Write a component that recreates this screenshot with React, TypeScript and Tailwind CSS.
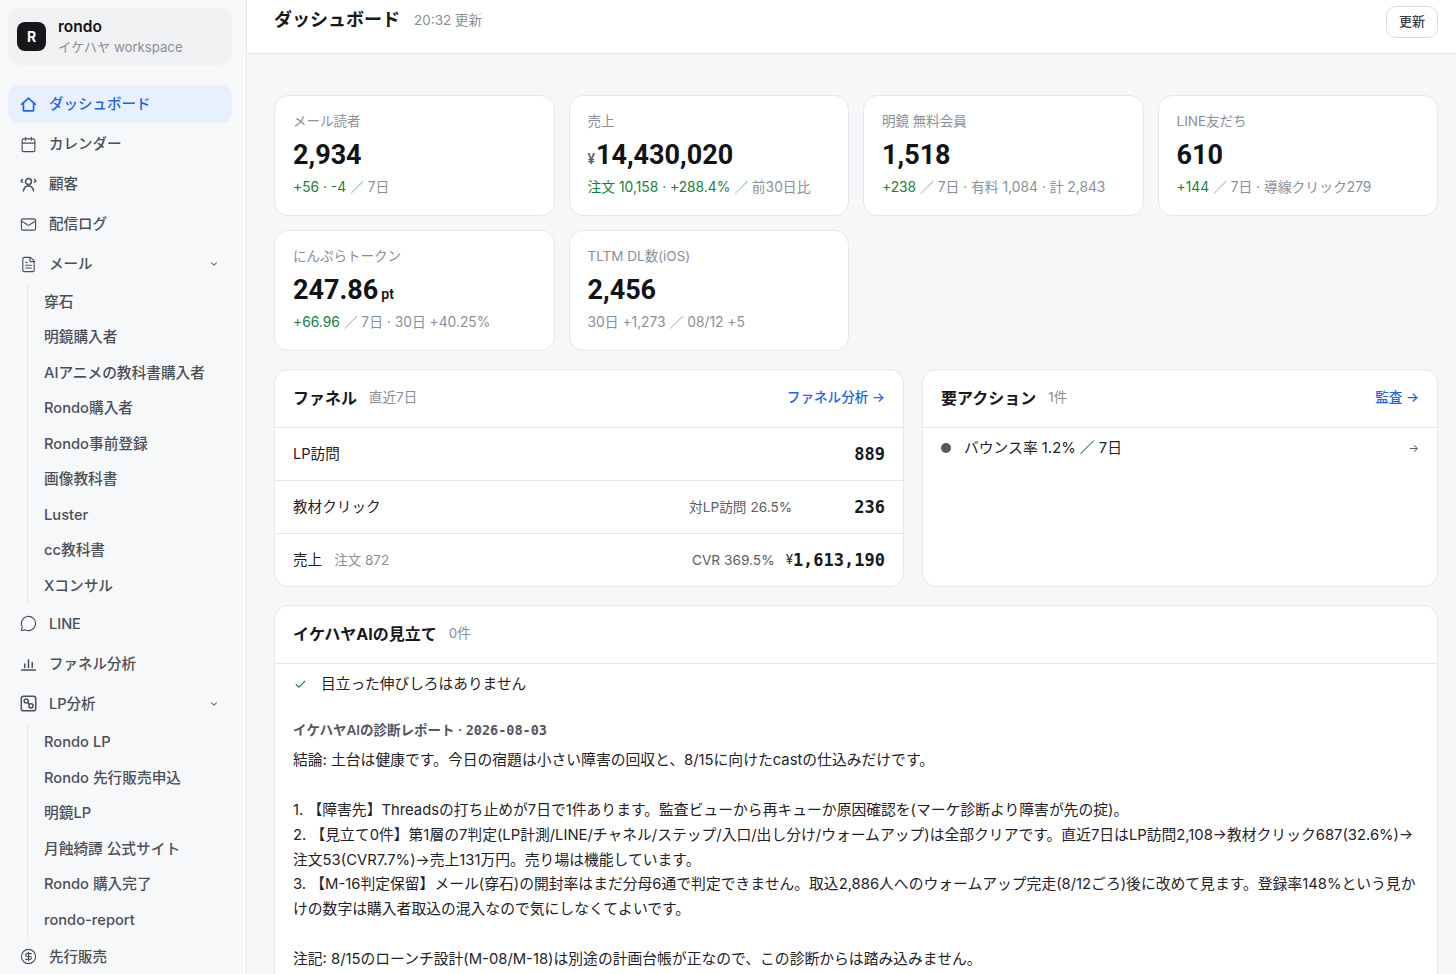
import type { ReactNode } from "react";
import { Calendar, Mail, FileText, MessageCircle, CircleDollarSign, ChevronDown, Check } from "lucide-react";

const FONT = "[font-family:Inter,'Noto_Sans_CJK_JP',sans-serif]";
const NUM = "[font-family:Roboto,'Noto_Sans_CJK_JP',sans-serif]";
const MONO = "[font-family:'DejaVu_Sans_Mono','Noto_Sans_CJK_JP',monospace]";

const HomeIcon = () => (
  <svg width="17" height="17" viewBox="0 0 16 16" fill="none" stroke="currentColor" strokeWidth="1.600" strokeLinecap="round" strokeLinejoin="round">
    <path d="M1.500 7.800 8 2l6.500 5.800" />
    <path d="M3.200 6.500v6.800c0 .4.300.7.700.7h8.200c.4 0 .7-.3.700-.7V6.500" />
  </svg>
);

const CustomerIcon = () => (
  <svg width="17" height="17" viewBox="0 0 16 16" fill="none" stroke="currentColor" strokeWidth="1.400" strokeLinecap="round" strokeLinejoin="round">
    <circle cx="8" cy="5.200" r="2.800" />
    <path d="M3.200 14c.5-3 2.400-4.600 4.800-4.600s4.300 1.600 4.800 4.600" />
    <path d="M2.300 3.400 1 4.700l1.300 1.200M13.700 3.400 15 4.700l-1.300 1.200" />
  </svg>
);

const ChartIcon = () => (
  <svg width="17" height="17" viewBox="0 0 16 16" fill="none" stroke="currentColor" strokeWidth="1.400" strokeLinecap="round">
    <path d="M1.500 14.200h13M4.500 11.700V8.500M8 11.700V4.500M11.500 11.700V7" />
  </svg>
);

const LpIcon = () => (
  <svg width="17" height="17" viewBox="0 0 16 16" fill="none" stroke="currentColor" strokeWidth="1.400" strokeLinecap="round">
    <rect x="1.200" y="1.200" width="13.600" height="13.600" rx="2.200" />
    <circle cx="5.800" cy="5.600" r="1.900" />
    <circle cx="10.300" cy="10.200" r="2" />
    <path d="M7.300 6.800 8.800 8.700" />
  </svg>
);

const NavItem = ({ icon, label, active, caret }: { icon: ReactNode; label: string; active?: boolean; caret?: boolean }) => (
  <div
    className={`flex h-[38px] items-center gap-[12px] rounded-[10px] pl-[12px] pr-[13px] text-[14.500px] font-medium ${
      active ? "bg-[#e8f0fe] text-[#2563eb]" : "text-[#4b5058]"
    }`}
  >
    <span className="flex w-[17px] justify-center">{icon}</span>
    <span className="flex-1">{label}</span>
    {caret && <ChevronDown size={10} strokeWidth={2.500} />}
  </div>
);

const SubList = ({ items }: { items: string[] }) => (
  <div className="ml-[19px] border-l border-[#e2e4e8] pl-4">
    {items.map((item) => (
      <div key={item} className="flex h-[35.500px] items-center text-[14.700px] font-medium text-[#4b5058]">
        {item}
      </div>
    ))}
  </div>
);

const Sidebar = () => (
  <aside className="flex h-full w-[247px] shrink-0 flex-col border-r border-[#e7e8ec] bg-[#f7f8fa] pl-2 pr-[14px] pt-2">
    <div className="mb-5 flex h-[57px] shrink-0 items-center gap-3 rounded-[12px] bg-[#f0f1f3] pl-[9px]">
      <div className="flex h-[29px] w-[29px] items-center justify-center rounded-[8px] bg-[#15171a] text-[14px] font-bold text-white">R</div>
      <div>
        <div className="text-[15.500px] leading-[20px] font-semibold text-[#111]">rondo</div>
        <div className="text-[13.200px] leading-[20px] text-[#8b8f97]">イケハヤ workspace</div>
      </div>
    </div>
    <nav className="flex flex-col gap-[2px]">
      <NavItem active icon={<HomeIcon />} label="ダッシュボード" />
      <NavItem icon={<Calendar size={17} strokeWidth={1.600} />} label="カレンダー" />
      <NavItem icon={<CustomerIcon />} label="顧客" />
      <NavItem icon={<Mail size={17} strokeWidth={1.600} />} label="配信ログ" />
      <NavItem caret icon={<FileText size={17} strokeWidth={1.600} />} label="メール" />
      <div className="-mt-px -mb-px">
        <SubList items={["穿石", "明鏡購入者", "AIアニメの教科書購入者", "Rondo購入者", "Rondo事前登録", "画像教科書", "Luster", "cc教科書", "Xコンサル"]} />
      </div>
      <NavItem icon={<MessageCircle size={17} strokeWidth={1.600} />} label="LINE" />
      <NavItem icon={<ChartIcon />} label="ファネル分析" />
      <NavItem caret icon={<LpIcon />} label="LP分析" />
      <div className="-mb-[2px]">
        <SubList items={["Rondo LP", "Rondo 先行販売申込", "明鏡LP", "月蝕綺譚 公式サイト", "Rondo 購入完了", "rondo-report"]} />
      </div>
      <NavItem icon={<CircleDollarSign size={17} strokeWidth={1.600} />} label="先行販売" />
    </nav>
  </aside>
);

const StatCard = ({ label, value, prefix, unit, children }: { label: string; value: string; prefix?: string; unit?: string; children: ReactNode }) => (
  <div className="h-[121px] rounded-[14px] border border-[#e5e7eb] bg-white pl-[18px] pt-[15px]">
    <div className="text-[13.500px] leading-[20px] text-[#8b8f97]">{label}</div>
    <div className={`${NUM} mt-[7px] flex h-[34px] items-baseline text-[27px] leading-[34px] font-bold text-[#111318]`}>
      {prefix && <span className="mr-px text-[14px] font-medium text-[#5a5f68]">{prefix}</span>}
      {value}
      {unit && <span className="ml-[3px] text-[14px] font-semibold">{unit}</span>}
    </div>
    <div className="mt-[5px] text-[13.800px] leading-[20px] text-[#8b8f97]">{children}</div>
  </div>
);

const Green = ({ children }: { children: ReactNode }) => <span className="text-[#15803d]">{children}</span>;

const PanelHead = ({ title, sub, link }: { title: string; sub: string; link?: string }) => (
  <div className="flex h-[58px] items-center border-b border-[#e5e7eb] px-[18px] pb-[2px]">
    <span className="text-[16px] font-bold text-[#17191d]">{title}</span>
    <span className="ml-3 text-[13.500px] text-[#8b8f97]">{sub}</span>
    {link && <span className="ml-auto text-[13.600px] font-medium text-[#2563eb]">{link}</span>}
  </div>
);

const FunnelRow = ({ label, note, mid, value, prefix, last }: { label: string; note?: string; mid?: string; value: string; prefix?: string; last?: boolean }) => (
  <div className={`flex items-center px-[18px] ${last ? "h-[52px]" : "h-[53px] border-b border-[#e5e7eb]"}`}>
    <span className="mt-[2px] text-[14.600px] text-[#1f2227]">{label}</span>
    {note && <span className="ml-3 text-[13.500px] text-[#8b8f97]">{note}</span>}
    <span className={`ml-auto text-[13.700px] text-[#5a5f68] ${value === "236" ? "mr-[62px]" : "mr-[11px]"}`}>{mid}</span>
    {prefix && <span className="text-[13px] font-medium text-[#3d4148]">{prefix}</span>}
    <span className={`${MONO} mt-[2px] text-[17px] font-semibold text-[#17191d]`}>{value}</span>
  </div>
);

const report = [
  "結論: 土台は健康です。今日の宿題は小さい障害の回収と、8/15に向けたcastの仕込みだけです。",
  "",
  "1. 【障害先】Threadsの打ち止めが7日で1件あります。監査ビューから再キューか原因確認を(マーケ診断より障害が先の掟)。",
  "2. 【見立て0件】第1層の7判定(LP計測/LINE/チャネル/ステップ/入口/出し分け/ウォームアップ)は全部クリアです。直近7日はLP訪問2,108→教材クリック687(32.6%)→",
  "注文53(CVR7.7%)→売上131万円。売り場は機能しています。",
  "3. 【M-16判定保留】メール(穿石)の開封率はまだ分母6通で判定できません。取込2,886人へのウォームアップ完走(8/12ごろ)後に改めて見ます。登録率148%という見か",
  "けの数字は購入者取込の混入なので気にしなくてよいです。",
  "",
  "注記: 8/15のローンチ設計(M-08/M-18)は別途の計画台帳が正なので、この診断からは踏み込みません。",
];

export default function App() {
  return (
    <div className={`${FONT} flex h-[974px] w-[1456px] overflow-hidden bg-[#f6f7f9]`}>
      <Sidebar />
      <main className="min-w-0 flex-1">
        <header className="flex h-[54px] items-start border-b border-[#e5e7eb] bg-white pl-[27px] pr-[18px]">
          <h1 className="mt-[7px] text-[18px] leading-[26px] font-bold text-[#17191d]">ダッシュボード</h1>
          <span className="ml-[14px] mt-[10px] text-[13.500px] leading-[20px] text-[#8b8f97]">20:32 更新</span>
          <button className="ml-auto mt-[6px] h-[32px] w-[52px] rounded-[10px] border border-[#d9dbe0] bg-white text-[13px] font-medium text-[#3d4148]">更新</button>
        </header>

        <div className="pl-[27px] pr-[18px] pt-[41px]">
          <div className="grid grid-cols-4 gap-[14px]">
            <StatCard label="メール読者" value="2,934">
              <Green>+56 · -4</Green> ／ 7日
            </StatCard>
            <StatCard label="売上" prefix="¥" value="14,430,020">
              <Green>注文 10,158 · +288.4%</Green> ／ 前30日比
            </StatCard>
            <StatCard label="明鏡 無料会員" value="1,518">
              <Green>+238</Green> ／ 7日 · 有料 1,084 · 計 2,843
            </StatCard>
            <StatCard label="LINE友だち" value="610">
              <Green>+144</Green> ／ 7日 · 導線クリック279
            </StatCard>
            <StatCard label="にんぷらトークン" value="247.86" unit="pt">
              <Green>+66.96</Green> ／ 7日 · 30日 +40.25%
            </StatCard>
            <StatCard label="TLTM DL数(iOS)" value="2,456">
              30日 +1,273 ／ 08/12 +5
            </StatCard>
          </div>

          <div className="mt-[18px] grid grid-cols-[630px_1fr] gap-[18px]">
            <section className="overflow-hidden rounded-[14px] border border-[#e5e7eb] bg-white">
              <PanelHead title="ファネル" sub="直近7日" link="ファネル分析 →" />
              <FunnelRow label="LP訪問" value="889" />
              <FunnelRow label="教材クリック" mid="対LP訪問 26.5%" value="236" />
              <FunnelRow last label="売上" note="注文 872" mid="CVR 369.5%" prefix="¥" value="1,613,190" />
            </section>
            <section className="overflow-hidden rounded-[14px] border border-[#e5e7eb] bg-white">
              <PanelHead title="要アクション" sub="1件" link="監査 →" />
              <div className="flex h-[40px] items-center px-[18px] text-[14.800px] text-[#1f2227]">
                <span className="h-[10px] w-[10px] rounded-full bg-[#55585f]" />
                <span className="ml-[13px]">バウンス率 1.2% ／ 7日</span>
                <span className="ml-auto text-[11px] text-[#5a5f68]">→</span>
              </div>
            </section>
          </div>

          <section className="mt-[18px] rounded-[14px] border border-[#e5e7eb] bg-white pb-6">
            <PanelHead title="イケハヤAIの見立て" sub="0件" />
            <div className="flex h-[39px] items-center px-[18px] pt-[2px] text-[14.700px] text-[#1f2227]">
              <Check size={13} strokeWidth={2} className="ml-[1px] text-[#15803d]" />
              <span className="ml-[14px]">目立った伸びしろはありません</span>
            </div>
            <div className="mt-[17px] px-[18px] text-[13.500px] leading-[20px] font-semibold text-[#55585f]">
              イケハヤAIの診断レポート · <span className={MONO}>2026-08-03</span>
            </div>
            <div className="mt-[8px] px-[18px] text-[14.800px] leading-[24.900px] text-[#1f2227]">
              {report.map((line, i) => (
                <div key={i} className="h-[24.900px] whitespace-nowrap">{line}</div>
              ))}
            </div>
          </section>
        </div>
      </main>
    </div>
  );
}
